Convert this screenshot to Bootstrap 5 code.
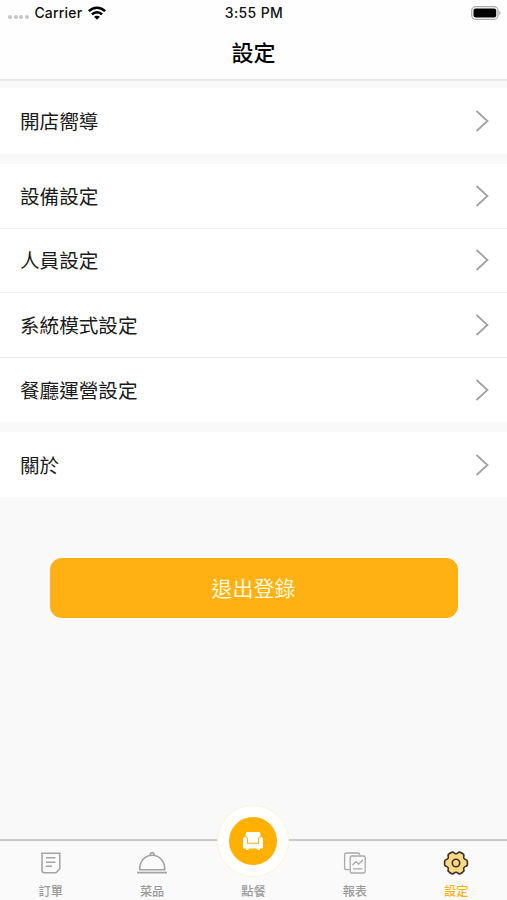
<!DOCTYPE html>
<html lang="zh-Hant">
<head>
<meta charset="utf-8">
<meta name="viewport" content="width=device-width, initial-scale=1">
<title>設定</title>
<link href="https://cdn.jsdelivr.net/npm/bootstrap@5.3.0/dist/css/bootstrap.min.css" rel="stylesheet">
<style>
body{font-family:Inter,"Noto Sans CJK TC",sans-serif;background:#f9f9f9;color:#111;height:900px;overflow:hidden}
svg{display:block;flex:none}
.app-head{height:81px;border-bottom:2px solid #e9e9e9;background:#fefefe}
.status{height:26px;font-size:14px;font-weight:500;line-height:26px;padding:0 6px 0 8px;letter-spacing:.2px}
.status>*{flex:1 1 0}
.clock{letter-spacing:.35px;padding-right:1px}
.wifi{margin-left:6px}
.dots i{width:4px;height:4px;border-radius:50%;background:#c6c6c6;margin-right:1.6px}
.dots{padding-top:8px;margin-right:4px}
.title{font-size:22px;font-weight:500;line-height:30px;height:53px;padding-top:10px;color:#000;font-family:"Noto Sans CJK TC",sans-serif}
.settings{padding-top:7px;gap:10px}
.settings .list-group-item{height:64.6px;padding:0 18px 0 20px;border-color:#ececec;font-size:19.6px;line-height:28px;color:#1b1b1b;background:#fff}
.settings .list-group:first-child .list-group-item{height:66px}
.settings span{padding-top:2px}
.logout{height:60px;margin:61px 49px 0 50px;padding:8px 1px 6px 0;border-radius:12px;background:#ffb013;color:#fff8dc;font-size:21px;line-height:30px;border:0}
.tabs{height:61px;border-top:2px solid #c9c9c9;background:#fafafa;font-weight:500;line-height:16px}
.tabs a{width:20%;height:59px;color:#9b9b9b;padding-top:9px}
.tabs a.current{color:#ffb013}
.tabs .caption-text{margin-top:8px;font-size:12.2px}
.seat{width:72px;height:72px;border-radius:50%;background:#fff;border:1px solid #fff3d2;top:-36px;left:calc(50% - 36.5px)}
.seat div{width:48px;height:48px;border-radius:50%;background:#ffb000}
</style>
</head>
<body class="d-flex flex-column">
<header class="app-head">
  <div class="status d-flex">
    <div class="d-flex align-items-center"><div class="dots d-flex"><i></i><i></i><i></i><i></i></div><span>Carrier</span>
      <svg class="wifi" width="18" height="14" viewBox="0 0 18 14" fill="none" stroke="#000" stroke-width="2.500"><path d="M.9 5.200C5.500.5 12.500.5 17.100 5.200M3.900 8.300c2.900-2.900 7.300-2.900 10.200 0"/><path d="M9 13.700 6.100 10.800c1.700-1.500 4.100-1.500 5.800 0z" fill="#000" stroke="none"/></svg>
    </div>
    <div class="clock text-center">3:55 PM</div>
    <div class="d-flex justify-content-end align-items-center"><svg width="30" height="14" viewBox="0 0 30 14"><rect x=".7" y=".7" width="26.300" height="12.600" rx="4" fill="#fff" stroke="#aaa" stroke-width="1.300"/><rect x="2.500" y="2.500" width="22.700" height="9" rx="2"/><path d="M28.200 5v4c1.800-.8 1.800-3.200 0-4" fill="#aaa"/></svg></div>
  </div>
  <h1 class="title text-center mb-0">設定</h1>
</header>
<main class="flex-grow-1">
  <div class="settings d-flex flex-column">
    <div class="list-group list-group-flush">
      <a href="#" class="list-group-item d-flex justify-content-between align-items-center"><span>開店嚮導</span><svg width="14" height="24" viewBox="0 0 14 24" fill="none" stroke="#a0a0a0" stroke-width="1.700"><path d="m1.500 2 11 10-11 10"/></svg></a>
    </div>
    <div class="list-group list-group-flush">
      <a href="#" class="list-group-item d-flex justify-content-between align-items-center"><span>設備設定</span><svg width="14" height="24" viewBox="0 0 14 24" fill="none" stroke="#a0a0a0" stroke-width="1.700"><path d="m1.500 2 11 10-11 10"/></svg></a>
      <a href="#" class="list-group-item d-flex justify-content-between align-items-center"><span>人員設定</span><svg width="14" height="24" viewBox="0 0 14 24" fill="none" stroke="#a0a0a0" stroke-width="1.700"><path d="m1.500 2 11 10-11 10"/></svg></a>
      <a href="#" class="list-group-item d-flex justify-content-between align-items-center"><span>系統模式設定</span><svg width="14" height="24" viewBox="0 0 14 24" fill="none" stroke="#a0a0a0" stroke-width="1.700"><path d="m1.500 2 11 10-11 10"/></svg></a>
      <a href="#" class="list-group-item d-flex justify-content-between align-items-center"><span>餐廳運營設定</span><svg width="14" height="24" viewBox="0 0 14 24" fill="none" stroke="#a0a0a0" stroke-width="1.700"><path d="m1.500 2 11 10-11 10"/></svg></a>
    </div>
    <div class="list-group list-group-flush">
      <a href="#" class="list-group-item d-flex justify-content-between align-items-center"><span>關於</span><svg width="14" height="24" viewBox="0 0 14 24" fill="none" stroke="#a0a0a0" stroke-width="1.700"><path d="m1.500 2 11 10-11 10"/></svg></a>
    </div>
  </div>
  <div class="d-grid"><button class="btn logout" type="button">退出登錄</button></div>
</main>
<nav class="tabs d-flex position-relative">
  <a href="#" class="d-flex flex-column align-items-center text-decoration-none">
    <svg width="26" height="26" viewBox="0 0 26 26" fill="none" stroke="#a3a3a3" stroke-width="1.500"><path d="M4 3.200h17.800v15.600L18 22.800H6.500Q4 22.800 4 20.300zM8 7.800h9.500M8 12.300h9.500M8 16.300h6"/></svg>
    <span class="caption-text">訂單</span></a>
  <a href="#" class="d-flex flex-column align-items-center text-decoration-none">
    <svg width="30" height="26" viewBox="0 0 30 26" fill="none" stroke="#a3a3a3" stroke-width="1.600"><path d="M0 22.600h30M2.700 19.800h25c.4-8-4.900-14.500-12.500-14.500S2.300 11.800 2.700 19.800zM13.300 5c-.8-3.200 4.600-3.200 3.800 0"/></svg>
    <span class="caption-text">菜品</span></a>
  <a href="#" class="d-flex flex-column align-items-center text-decoration-none">
    <svg width="26" height="26"></svg>
    <span class="caption-text">點餐</span></a>
  <a href="#" class="d-flex flex-column align-items-center text-decoration-none">
    <svg width="26" height="26" viewBox="0 0 26 26" fill="none" stroke="#a9a9a9" stroke-width="1.300"><path d="M7.500 19.700H4.300Q2.600 19.700 2.600 18V4.800Q2.600 3 4.300 3H16q1.700 0 1.700 1.800"/><rect x="8.200" y="6" width="15" height="17" rx="1.500"/><path d="m10.500 15 3.500-3.300 2.700 2.500 4.300-4.400M11 18.800h9.500"/></svg>
    <span class="caption-text">報表</span></a>
  <a href="#" class="current d-flex flex-column align-items-center text-decoration-none">
    <svg width="26" height="26" viewBox="-13 -13 26 26" fill="#ffd885" stroke="#383128" stroke-width="1.600" stroke-linejoin="round"><path d="M10.100-3.300C11.900-3 11.900 3 10.100 3.300Q6.900 4 7.900 7.100C8.500 8.900 3.400 11.800 2.200 10.400Q0 8-2.200 10.400C-3.400 11.800-8.500 8.900-7.900 7.100Q-6.900 4-10.100 3.300C-11.900 3-11.900-3-10.100-3.300Q-6.900-4-7.900-7.100C-8.500-8.900-3.400-11.800-2.200-10.400Q0-8 2.200-10.400C3.400-11.800 8.500-8.900 7.900-7.100Q6.900-4 10.100-3.300Z"/><circle r="3.700"/></svg>
    <span class="caption-text">設定</span></a>
  <div class="seat position-absolute d-flex justify-content-center align-items-center"><div class="d-flex justify-content-center align-items-center">
    <svg width="22" height="20" viewBox="0 0 22 20" fill="#fff"><path d="M3.500 5V3Q3.500 1 5.500 1h11q2 0 2 2v2q-2.500.5-2.500 3v3.700H6V8Q6 5.500 3.500 5z"/><path d="M3 6q2 0 2 2v4.800h12V8q0-2 2-2t2 2v8q0 1.500-1.500 1.500H18V19h-2.500v-1.500h-9V19H4v-1.500H2.500Q1 17.500 1 16V8q0-2 2-2z"/></svg>
  </div></div>
</nav>
<script src="https://cdn.jsdelivr.net/npm/bootstrap@5.3.0/dist/js/bootstrap.bundle.min.js"></script>
</body>
</html>
